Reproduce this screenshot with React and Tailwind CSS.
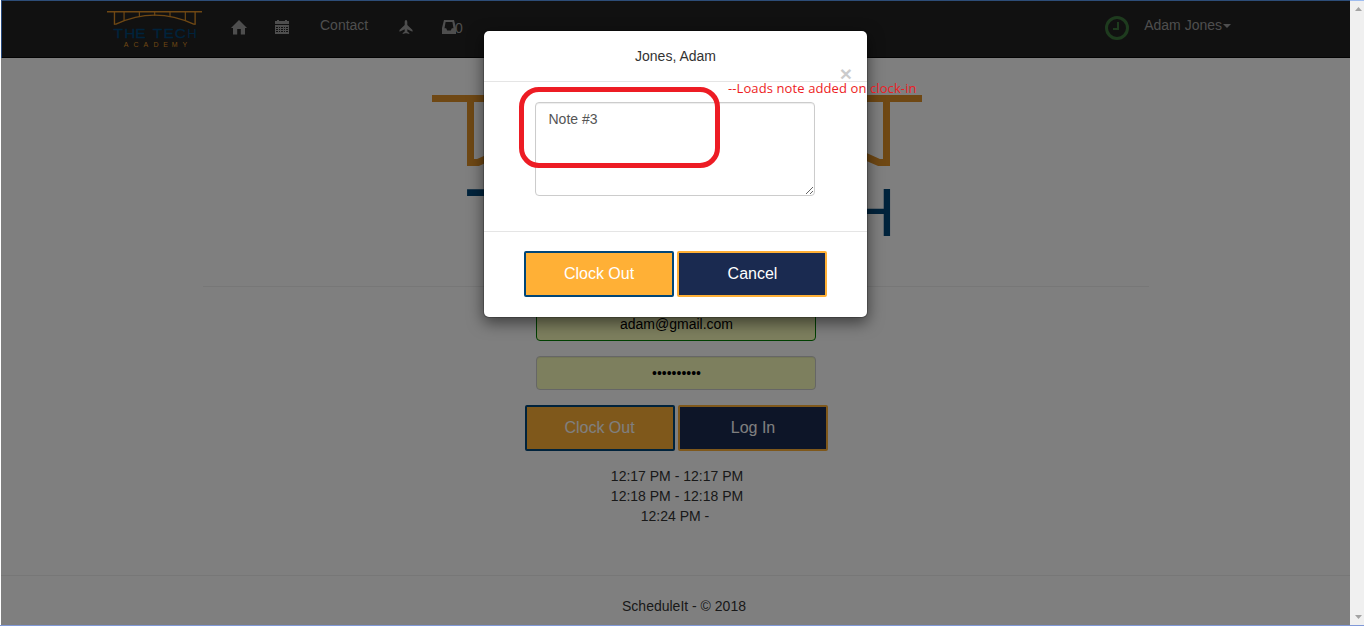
import React from "react";

function Logo({ className }) {
  return (
    <svg viewBox="0 0 490 190" className={className}>
      <g fill="none" stroke="#de9028">
        <path d="M0 3.5H490" strokeWidth="7" />
        <path d="M38.5 3V71M454.500 3V71" strokeWidth="7" />
        <path d="M88 3V49M167 3V31M246 3V24M325 3V31M404 3V49" strokeWidth="6" />
        <path d="M38 67.500H46Q246 -26 447 67.500H455" strokeWidth="7" />
      </g>
      <g fontFamily="Liberation Sans" fill="#004678">
        <text transform="scale(1.2 1)" y="141" x="28.500 74 121 197 243 291" fontSize="66" stroke="#004678" strokeWidth="1.6">THETEC</text>
        <text x="414.500" y="141" fontSize="68">H</text>
      </g>
      <text y="187" x="87 137 188 240 290 334 389" fontFamily="Liberation Sans" fontSize="36" fill="#de9028">ACADEMY</text>
    </svg>
  );
}

function HomeIcon() {
  return (
    <svg viewBox="0 0 16 15" className="h-[15px] w-4" fill="currentColor">
      <path d="M8 0 16 8H14V14.500H9.800V9H6.200V14.500H2V8H0L8 0Z" />
    </svg>
  );
}

function CalendarIcon() {
  return (
    <svg viewBox="0 0 14 14" className="h-3.5 w-3.5" fill="currentColor" shapeRendering="crispEdges">
      <path fillRule="evenodd" d="M2 0H4V1H10V0H12V1H14V4H0V1H2ZM0 5H14V14H0ZM1 7V8H3V7ZM4 7V8H5V7ZM6 7V8H8V7ZM9 7V8H10V7ZM11 7V8H13V7ZM1 9V10H3V9ZM4 9V10H5V9ZM6 9V10H8V9ZM9 9V10H10V9ZM11 9V10H13V9ZM1 11V12H3V11ZM4 11V12H5V11ZM6 11V12H8V11ZM9 11V12H10V11ZM11 11V12H13V11Z" />
    </svg>
  );
}

function PlaneIcon() {
  return (
    <svg viewBox="0 0 14 14" className="h-3.5 w-3.5" fill="currentColor">
      <path d="M7 0C7.900 0 8.300 1.200 8.300 2.300V5L13.500 10V11.700L8.300 9.300V11.500L10.300 13V14L7.600 13.300H6.400L3.700 14V13L5.700 11.500V9.300L.5 11.700V10L5.700 5V2.300C5.700 1.200 6.100 0 7 0Z" />
    </svg>
  );
}

function InboxIcon() {
  return (
    <svg viewBox="0 0 14 14" className="h-3.5 w-3.5" fill="currentColor">
      <path fillRule="evenodd" d="M2 0H12L14 8V14H0V8ZM3.600 2 2.500 8.300H4.200L5.200 10.500H8.800L9.800 8.300H11.500L10.400 2Z" />
    </svg>
  );
}

function NavBar() {
  return (
    <nav className="flex h-[57px] shrink-0 border-b border-[#080808] bg-[#222] text-[#9d9d9d]">
      <Logo className="mt-2.5 ml-[106px] h-[37px] w-[95px]" />
      <div className="mt-[19px] ml-[29px]"><HomeIcon /></div>
      <div className="mt-[19px] ml-7"><CalendarIcon /></div>
      <span className="mt-3.5 ml-[31px] w-[49px]">Contact</span>
      <div className="mt-[19px] ml-[30px]"><PlaneIcon /></div>
      <div className="mt-[19px] ml-[29px] flex">
        <InboxIcon />
        <span className="-mt-0.5 -ml-px">0</span>
      </div>
      <div className="mr-[119px] ml-auto flex">
        <svg viewBox="0 0 24 24" className="mt-[15px] h-6 w-6" fill="none" stroke="#3c763d">
          <circle cx="12" cy="12" r="10.500" strokeWidth="3" />
          <path d="M13 6V13H8" strokeWidth="2" />
        </svg>
        <span className="mt-3.5 ml-[15px]">Adam Jones</span>
        <svg viewBox="0 0 8 4" className="mt-[23px] ml-px h-1 w-2" fill="currentColor">
          <path d="M0 0H8L4 4Z" />
        </svg>
      </div>
    </nav>
  );
}

const buttonBase = "h-[46px] w-[150px] rounded-[2px] border-2 text-base leading-6 text-white ";
const orange = buttonBase + "border-[#004678] bg-[#ffb036]";
const navy = buttonBase + "border-[#ffb036] bg-[#1a2a50] pl-px";

function LoginPage() {
  return (
    <main className="flex flex-1 flex-col">
      <Logo className="mt-[37px] ml-0.5 h-[190px] w-[490px] self-center" />
      <hr className="mt-px mr-[201px] ml-[202px] border-[#eee]" />
      <form className="mt-5 flex flex-col items-center">
        <input readOnly value="adam@gmail.com" className="h-[34px] w-[280px] rounded border border-[#008000] bg-[#faffbd] pl-0.5 text-center text-black outline-none" />
        <input readOnly type="password" value="abcdefghij" className="mt-[15px] h-[34px] w-[280px] rounded border border-[#ccc] bg-[#faffbd] pl-0.5 text-center text-black shadow-[inset_0_1px_1px_rgba(0,0,0,0.075)] outline-none" />
        <div className="mt-[15px] ml-px flex gap-[3px]">
          <button type="button" className={orange}>Clock Out</button>
          <button type="button" className={navy}>Log In</button>
        </div>
      </form>
      <div className="mt-[15px] ml-[3px] text-center leading-5">
        <p>12:17 PM - 12:17 PM</p>
        <p>12:18 PM - 12:18 PM</p>
        <p className="mr-1">12:24 PM -</p>
      </div>
      <footer className="mt-auto h-[51px] border-t border-[#eee] pt-5 pl-[21px] text-center">
        <p className="mr-1">ScheduleIt - © 2018</p>
      </footer>
    </main>
  );
}

function ClockOutDialog() {
  return (
    <div className="absolute top-[30px] left-[483px] flex h-[288px] w-[385px] flex-col rounded-md border border-black/20 bg-white bg-clip-padding shadow-[0_5px_15px_rgba(0,0,0,0.5)]">
      <header className="relative h-[51px] border-b border-[#e5e5e5] pt-[15px] text-center">
        Jones, Adam
        <button className="absolute top-8 right-[15px] text-[21px] leading-[21px] font-bold text-black opacity-20">×</button>
      </header>
      <div className="flex h-[149px] pt-5 pl-[51px]">
        <textarea defaultValue="Note #3" className="h-[94px] w-[280px] resize rounded border border-[#ccc] py-1.5 pr-3 pl-[12.5px] leading-5 text-[#555] shadow-[inset_0_1px_1px_rgba(0,0,0,0.075)] outline-none" />
      </div>
      <footer className="flex flex-1 justify-center gap-[3px] border-t border-[#e5e5e5] pt-[19px]">
        <button className={orange}>Clock Out</button>
        <button className={navy}>Cancel</button>
      </footer>
    </div>
  );
}

export default function App() {
  return (
    <div className="relative flex h-[626px] w-[1364px] overflow-hidden bg-white pl-px font-['Liberation_Sans',Arial,sans-serif] text-sm leading-5 text-[#333]">
      <div className="relative flex w-[1349px] flex-col border-t border-[#5b9bf0] bg-white">
        <NavBar />
        <LoginPage />
        <div className="absolute inset-x-0 -top-px bottom-0 bg-black/50" />
      </div>
      <div className="flex w-3.5 flex-col items-center justify-between border-t border-[#9fbdf0] bg-[#f0f0f0] pt-[6px] pb-[7px] pl-[3px]">
        <svg viewBox="0 0 7 4" className="h-1 w-[7px]" fill="#a3a3a3"><path d="M0 4H7L3.500 0Z" /></svg>
        <svg viewBox="0 0 7 4" className="h-1 w-[7px]" fill="#a3a3a3"><path d="M0 0H7L3.500 4Z" /></svg>
      </div>
      <ClockOutDialog />
      <div className="absolute top-[87px] left-[519px] h-[81px] w-[201px] rounded-[20px] border-5 border-[#ed1c24]" />
      <span className="absolute top-[78px] left-[728px] font-['Open_Sans',sans-serif] text-[13px] tracking-[0.1px] whitespace-nowrap text-[#ed1c24]">--Loads note added on clock-in</span>
      <div className="absolute top-0 left-px h-[58px] w-px bg-[#274b80]" />
      <div className="absolute inset-x-0 bottom-0 h-px bg-[#8099d8]" />
    </div>
  );
}
